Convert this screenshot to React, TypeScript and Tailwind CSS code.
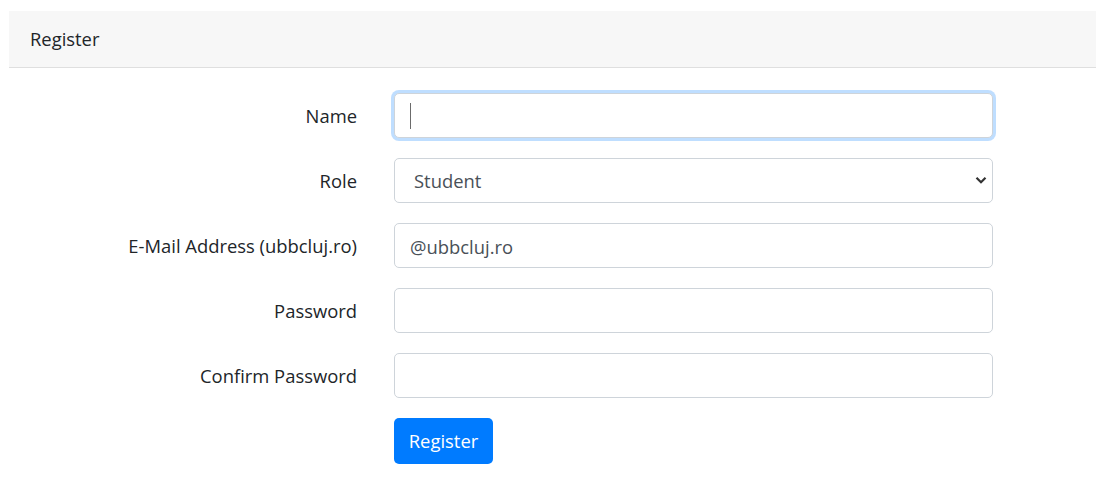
import React from "react";

const inputBase =
  "w-[599px] h-[45px] rounded-[5px] border border-[#ced4da] bg-white px-[15px] text-[18.4px] text-[#495057] outline-none";

function Row({ label, children }: { label: string; children: React.ReactNode }) {
  return (
    <div className="flex items-center">
      <label className="w-[348px] pt-[1px] text-right text-[18.4px] text-[#212529]">{label}</label>
      <div className="ml-[37px]">{children}</div>
    </div>
  );
}

export default function App() {
  return (
    <div
      className="min-h-screen bg-white pt-[11px] pl-[9px]"
      style={{ fontFamily: '"Open Sans", "Noto Sans", sans-serif' }}
    >
      <div className="w-full">
        <div className="flex h-[57px] items-center border-b border-[#dfdfdf] bg-[#f7f7f7] pl-[21px] text-[18.4px] text-[#212529]">
          Register
        </div>
        <form className="flex flex-col gap-[20px] pt-[25px]" onSubmit={(e) => e.preventDefault()}>
          <Row label="Name">
            <div className="relative">
              <input
                type="text"
                className={`${inputBase} border-[#80bdff] shadow-[0_0_0_3px_rgba(0,123,255,0.25)]`}
              />
              <span className="pointer-events-none absolute left-[16px] top-[10px] h-[26px] w-px bg-[#6b6b6b]" />
            </div>
          </Row>
          <Row label="Role">
            <div className="relative">
              <select className={`${inputBase} appearance-none pl-[19px] pt-[1px]`} defaultValue="Student">
                <option>Student</option>
                <option>Teacher</option>
              </select>
              <svg
                className="pointer-events-none absolute right-[6px] top-[18px]"
                width="12"
                height="9"
                viewBox="0 0 12 9"
              >
                <path d="M1.5 1.8 L6 6.3 L10.5 1.8" fill="none" stroke="#333" strokeWidth="2.2" />
              </svg>
            </div>
          </Row>
          <Row label="E-Mail Address (ubbcluj.ro)">
            <input type="email" className={`${inputBase} pt-[1px]`} defaultValue="@ubbcluj.ro" />
          </Row>
          <Row label="Password">
            <input type="password" className={inputBase} />
          </Row>
          <Row label="Confirm Password">
            <input type="password" className={inputBase} />
          </Row>
          <div className="pl-[385px]">
            <button
              type="submit"
              className="h-[46px] w-[99px] rounded-[5px] bg-[#007bff] text-[18.4px] text-white"
            >
              Register
            </button>
          </div>
        </form>
      </div>
    </div>
  );
}
